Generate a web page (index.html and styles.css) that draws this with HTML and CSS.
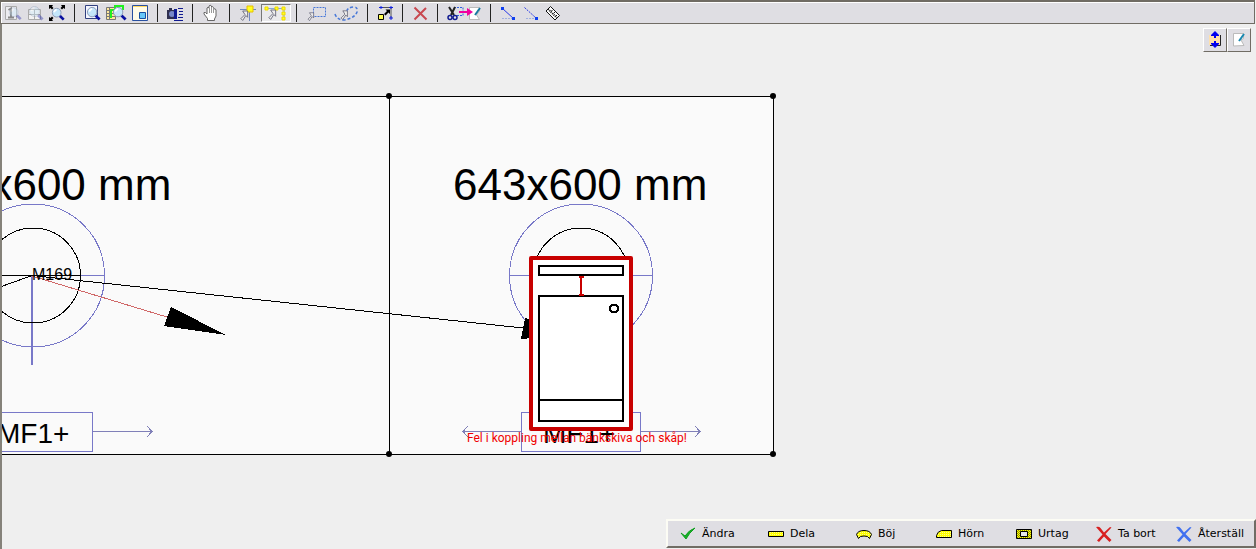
FILE: index.html
```html
<!DOCTYPE html>
<html lang="sv">
<head>
<meta charset="utf-8">
<title>Bänkskiva</title>
<link rel="stylesheet" href="styles.css">
</head>
<body>
<svg class="defs" width="0" height="0" aria-hidden="true">
  <defs>
    <symbol id="lens" viewBox="0 0 16 16">
      <path d="M10 10l4.500 4.500" stroke="#0a10a0" stroke-width="3"/>
      <circle cx="6.500" cy="6.500" r="5" fill="#c4e6fa" stroke="#8796b4"/>
      <path d="M3.500 6q.5-2.500 3-3" stroke="#fff" stroke-width="2" fill="none"/>
    </symbol>
    <symbol id="pointer" viewBox="0 0 10 12">
      <path d="M3 1h5.500v7L6.500 6 3 11.500 1 9.500 5.500 5z" fill="#eee" stroke="#667"/>
    </symbol>
    <symbol id="cross" viewBox="0 0 16 16">
      <path d="M0 1q3-1 4.500 1L8 6.500 14 1l1.500.5L9.500 8l6 6-2 2L8 10.500 3 16l-2-1.500L6.500 8.500z" fill="currentColor"/>
    </symbol>
    <pattern id="dots" width="2" height="2" patternUnits="userSpaceOnUse">
      <path d="M0 0h2v2H0z" fill="#ffff00"/><path d="M0 0h1v1H0z" fill="#ffff90"/>
    </pattern>
    <pattern id="darkdots" width="2" height="2" patternUnits="userSpaceOnUse">
      <path d="M0 0h2v2H0z" fill="#ffff00"/><path d="M0 0h1v1H0zM1 1h1v1H1z" fill="#8c8c00"/>
    </pattern>
  </defs>
</svg>

<header class="toolbar" role="toolbar" aria-label="Verktyg">
  <div class="group first">
    <button class="tool" aria-label="Skala 1:1" disabled><svg width="18" height="18"><path d="M1.500 2.500h11v13h-11z" fill="#ececf0" stroke="#aaa"/><path d="M4.500 6l2.500-1.500V13M4 13.500h6" fill="none" stroke="#888" stroke-width="2"/><use href="#lens" x="4" y="2" width="14" height="15" opacity=".35"/></svg></button>
    <button class="tool" aria-label="Zooma rutnät" disabled><svg width="18" height="18"><path d="M2.500 5.500h12v10h-12zM8.500 5v10M2 10.500h12" fill="#f2f2f2" stroke="#aaa"/><use href="#lens" x="2" y="1" width="16" height="16" opacity=".35"/></svg></button>
    <button class="tool" aria-label="Zooma allt"><svg width="18" height="18"><use href="#lens" x="3" y="3" width="14" height="14"/><path d="M1 1h4L4 2.500 5.500 4 4 5.500 2.500 4 1 5zM17 1h-4l1 1.500L12.500 4 14 5.500 15.500 4 17 5zM1 17v-4l1.500 1L4 12.500 5.500 14 4 15.500 5 17z"/></svg></button>
  </div>
  <span class="sep"></span>
  <div class="group">
    <button class="tool w24" aria-label="Zoomfönster"><svg width="18" height="18"><path d="M2.500 1.500h12v13h-12z" fill="#f4f6ff" stroke="#304080"/><use href="#lens" x="3" y="2" width="15" height="15"/></svg></button>
    <button class="tool w24" aria-label="Zooma urval"><svg width="22" height="18"><path d="M1.500 3.500h9v12h-9z" fill="#ffe89c" stroke="#777"/><path d="M1 6.500h9M1 9.500h9M1 12.500h9M4.500 3v12" stroke="#777"/><path d="M6 14V6h4V2h8v4" fill="none" stroke="#20f020" stroke-width="2"/><use href="#lens" x="7" y="2" width="15" height="15"/></svg></button>
    <button class="tool w24" aria-label="Översikt"><svg width="18" height="18"><path d="M1.500 1.500h15v15h-15z" fill="#fffce8" stroke="#2850a0"/><path d="M2 2.500h14" stroke="#ffd860"/><path d="M8.500 8.500h6v6h-6z" fill="#68c8f8" stroke="#1850a0"/></svg></button>
  </div>
  <span class="sep"></span>
  <div class="group">
    <button class="tool w24" aria-label="Kamera"><svg width="18" height="18"><path d="M1 6h2V4h3v2h3v9H1z" fill="#303050"/><circle cx="6" cy="10" r="3" fill="#7888c8"/><path d="M8 5h3v10H8z" fill="#101a90"/><path d="M12 4.500h5M13 7.500h4M13 10.500h4M12 13.500h5M8 16.500h9" stroke="#101a90"/></svg></button>
  </div>
  <span class="sep"></span>
  <div class="group">
    <button class="tool w26" aria-label="Panorera"><svg width="18" height="18"><path d="M5.500 16.500v-2L2 10V8.500h1.500L5 10V4q1-1.500 2 0V2q1-1.500 2.500 0v1q1.500-1 2 .5V5q2-1 2.500 1v6l-1.500 3v1.500z" fill="#fff" stroke="#666"/><path d="M7.500 4v5M9.500 3v6M11.500 4v5" stroke="#999"/></svg></button>
  </div>
  <span class="sep"></span>
  <div class="group">
    <button class="tool w26" aria-label="Välj punkt"><svg width="18" height="18"><path d="M1 5.500h16M10.500 5v12" stroke="#7088c0"/><path d="M8 2h6v6H8z" fill="#ffff20" stroke="#e8c000"/><use href="#pointer" x="1" y="6" width="9" height="11"/></svg></button>
    <button class="tool w30 pressed" aria-label="Välj punkter" aria-pressed="true"><svg width="24" height="18"><path d="M2 4.500h18v11" fill="none" stroke="#88a8d8"/><path d="M1 3h3v3H1zM11 3h3v3h-3zM18 3h3v3h-3zM18 8h3v3h-3zM18 13h3v3h-3z" fill="#ffff20" stroke="#f0d800"/><use href="#pointer" x="4" y="5" width="9" height="11"/></svg></button>
  </div>
  <span class="sep"></span>
  <div class="group">
    <button class="tool w30" aria-label="Rektangelval"><svg width="20" height="18"><path d="M6.500 3.500h12v9h-12z" fill="none" stroke="#4878d8" stroke-dasharray="2 1"/><use href="#pointer" x="0" y="8" width="8" height="9"/></svg></button>
    <button class="tool w30" aria-label="Frihandsval"><svg width="26" height="18"><path d="M1 10q2 6 9 6 11-2 13-8 1-5-3-5-8 0-8 8" fill="none" stroke="#4878d8" stroke-width="1.500" stroke-dasharray="3 2"/><use href="#pointer" x="6" y="6" width="9" height="10"/></svg></button>
  </div>
  <span class="sep"></span>
  <div class="group">
    <button class="tool w24" aria-label="Ändra storlek"><svg width="18" height="18"><path d="M5 3.500h10v11" fill="none" stroke="#555"/><path d="M3 3.500h4M5 2v3M13 3.500h4M15 2v3M13 14h4M15 12v4" stroke="#1020e0"/><path d="M2.500 10.500h5v5h-5z" fill="#ffff50" stroke="#000"/><path d="M8 10l3-3-1.500-1.500H14V10l-1.500-1.500-3 3z"/></svg></button>
  </div>
  <span class="sep"></span>
  <div class="group">
    <button class="tool w24" aria-label="Radera"><svg width="18" height="18"><path d="M3.500 3.500l12 12M15 4L3.500 15.500" stroke="#c84850" stroke-width="2"/></svg></button>
  </div>
  <span class="sep"></span>
  <div class="group">
    <button class="tool w42" aria-label="Klipp till anteckning"><svg width="36" height="18"><path d="M8 3.500h9v8H7" fill="none" stroke="#3060e0" stroke-dasharray="2 1"/><path d="M3 3l5 8M9 3L5 11" stroke="#222" stroke-width="2"/><circle cx="4" cy="13.500" r="2" fill="none" stroke="#101a90" stroke-width="1.500"/><circle cx="9" cy="13.500" r="2" fill="none" stroke="#101a90" stroke-width="1.500"/><path d="M23.500 3.500h10V7l-3 4 3 4.500h-10z" fill="#fff" stroke="#bbb"/><path d="M13 7h8V4l6 4-6 4V9h-8z" fill="#f000a0"/><path d="M29 11l5-7" stroke="#1878a0" stroke-width="2"/></svg></button>
  </div>
  <span class="sep"></span>
  <div class="group">
    <button class="tool w24" aria-label="Mät linje"><svg width="18" height="18"><path d="M3.500 4.500l11 10" stroke="#2838e8"/><path d="M3 14.500h10" stroke="#a0b0e0" stroke-dasharray="2 1"/><path d="M2 3h3v3H2zM13 13h3v3h-3z" fill="#1040f0"/></svg></button>
    <button class="tool" aria-label="Mät streckad linje"><svg width="18" height="18"><path d="M2.500 3.500l12 11" stroke="#2838e8" stroke-dasharray="2 1"/><path d="M4 14.500h10" stroke="#a0b0e0" stroke-dasharray="2 1"/><path d="M13 13h3v3h-3z" fill="#1040f0"/></svg></button>
    <button class="tool" aria-label="Linjal"><svg width="18" height="18"><path d="M6.500 2.500l9 9-4.500 4.500-9-9z" fill="#fff" stroke="#111"/><path d="M4 5l9 9" stroke="#111" stroke-width="2" stroke-dasharray="1 1"/><path d="M7 7.500l1.500-1.500M9.500 9.500l1.500-1.500M12 12l1-1" stroke="#111"/></svg></button>
  </div>
</header>

<main class="workspace">
  <svg class="drawing" width="100%" height="100%" role="img" aria-label="Ritning">
    <g transform="translate(-2 -24)" shape-rendering="crispEdges" fill="none">
      <path d="M-2 96.500H773.500V454.500H-2M389.500 96V454" fill="#fafafa" stroke="#000"/>
      <g fill="#000" shape-rendering="auto"><circle cx="389" cy="96" r="3"/><circle cx="773" cy="96" r="3"/><circle cx="389" cy="454" r="3"/><circle cx="773" cy="454" r="3"/></g>

      <g class="dimension"><text x="-83" y="200">643x600 mm</text><text x="453" y="200">643x600 mm</text></g>

      <g stroke="#7878c8">
        <circle cx="33" cy="275.500" r="71.500"/><path d="M33 275.500h72"/>
        <path d="M32 276v89" stroke-width="2"/>
        <path d="M-2 412.500H92.500V451.500H-2"/>
        <circle cx="581" cy="275.500" r="71.500"/><path d="M510 275.500h143"/>
        <path d="M521.500 412.500h119v39h-119z"/>
      </g>
      <g stroke="#8080b8"><path d="M93 431.500h60M147 426l5 5.500-5 5.500M521 431.500h-58M468 426l-5 5.500 5 5.500M641 431.500h59M695 426l5 5.500-5 5.500"/></g>
      <g stroke="#000">
        <circle cx="33" cy="275.500" r="47.500"/><circle cx="581" cy="275.500" r="47.500"/>
        <path d="M0 275.500h80M32 275.500L0 287M32 275.500L523 328"/>
      </g>
      <path d="M32 276l135 41" stroke="#d06868"/>
      <path d="M171 307l55 28-62-9zM525 318l60 16-64 5z" fill="#000"/>
      <text class="part" x="32" y="280">M169</text>
      <g class="cabinet-name"><text x="-3" y="443">MF1+</text><text x="543" y="443">MF1+</text></g>

      <rect x="531" y="258" width="100" height="171" fill="#fff" stroke="#c80000" stroke-width="4" stroke-linejoin="round" shape-rendering="auto"/>
      <path d="M539 266h84v9h-84zM539 296h84v125h-84zM539 400h84" stroke="#000" stroke-width="2"/>
      <circle cx="614" cy="308.500" r="4" stroke="#000" stroke-width="2"/>
      <path d="M581 277v18M579 277h5M579 294.500h5" stroke="#c80000" stroke-width="2"/>
      <text class="warning" x="467" y="442">Fel i koppling mellan bänkskiva och skåp!</text>
    </g>
  </svg>

  <div class="float-tools">
    <button class="tile" aria-label="Flytta vertikalt"><svg width="18" height="18"><path d="M3 4h11v10H3z" fill="#ffe0ac"/><path d="M14.500 4v10.500H4" fill="none" stroke="#222"/><path d="M9 0l4 4v1h-3v2H8V5H5V4zM9 17l4-4v-1h-3v-2H8v2H5v1z" fill="#0000f0"/></svg></button>
    <button class="tile" aria-label="Anteckning"><svg width="18" height="18"><path d="M3.500 2.500h10v5L11 9l3 5.500-10.500.5z" fill="#fff" stroke="#bbb"/><path d="M9 10l5-7" stroke="#1888b0" stroke-width="2"/></svg></button>
  </div>

  <nav class="actions" aria-label="Åtgärder">
    <button class="action wide"><svg width="16" height="16"><path d="M1 7l4 3q4-6 10-8-6 5-9 11z" fill="#18b028" stroke="#10a020"/></svg>Ändra</button>
    <button class="action wide"><svg width="16" height="16"><path d="M.5 5.500h15v5H.5z" fill="url(#dots)" stroke="#000"/></svg>Dela</button>
    <button class="action"><svg width="16" height="16"><path d="M.5 8.500Q2 4.500 8 4.500t7.500 4l-2 4-2-2q-3.500-1-7 0l-2 2z" fill="url(#dots)" stroke="#000"/></svg>Böj</button>
    <button class="action"><svg width="16" height="16"><path d="M.5 11.500v-2q1-4 5-5h10v7z" fill="url(#dots)" stroke="#000"/></svg>Hörn</button>
    <button class="action"><svg width="16" height="16"><path d="M.5 3.500h15v9H.5z" fill="url(#darkdots)" stroke="#000"/><path d="M4.500 5.500h7v5h-7z" fill="#e8e8e8" stroke="#000"/></svg>Urtag</button>
    <button class="action red"><svg width="16" height="16"><use href="#cross" width="16" height="16"/></svg>Ta bort</button>
    <button class="action blue last"><svg width="16" height="16"><use href="#cross" width="16" height="16"/></svg>Återställ</button>
  </nav>
</main>
</body>
</html>
```

FILE: styles.css
```css
* { box-sizing: border-box; }

html, body { height: 100%; }

body {
  margin: 0;
  display: flex;
  flex-direction: column;
  background: #efefef;
  color: #000;
  font-family: "DejaVu Sans", Verdana, sans-serif;
  font-size: 11px;
  overflow: hidden;
}

.defs { position: absolute; }

button {
  margin: 0;
  padding: 0;
  border: 0;
  background: none;
  color: inherit;
  font: inherit;
}

svg { display: block; flex: none; }

.toolbar {
  flex: none;
  display: flex;
  align-items: center;
  height: 24px;
  margin-right: 1px;
  padding-left: 1px;
  border: 1px solid #706c64;
  border-top-width: 2px;
  background: #dfdee3;
  box-shadow: inset 1px 1px #fff;
}

.group { display: flex; }

.first { padding-right: 1px; }

.tool {
  display: flex;
  align-items: center;
  justify-content: center;
  width: 22px;
  height: 18px;
}

.w24 { width: 24px; }
.w26 { width: 26px; }
.w30 { width: 30px; }
.w42 { width: 42px; }

.pressed {
  border: 1px solid;
  border-color: #777 #fff #fff #777;
  background: #eaeaec;
}

.sep {
  width: 1px;
  height: 18px;
  margin: 0 5px;
  background: #222;
}

.workspace {
  position: relative;
  flex: 1;
  min-height: 0;
  border-left: 2px solid #85827a;
  overflow: hidden;
}

.drawing {
  font-family: "Liberation Sans", Arial, sans-serif;
}

.drawing text { fill: #000; }
.dimension { font-size: 44px; }
.cabinet-name { font-size: 28px; }
.part { font-size: 16px; }
.drawing .warning { fill: #f00000; font-family: Roboto, Arial, sans-serif; font-size: 12px; }

.float-tools {
  position: absolute;
  top: 4px;
  right: 5px;
  display: flex;
}

.tile {
  display: flex;
  align-items: center;
  justify-content: center;
  width: 24px;
  height: 24px;
  border: 1px solid;
  border-color: #fff #706c64 #706c64 #fff;
  background: #dfdee3;
}

.actions {
  position: absolute;
  right: 0;
  bottom: 1px;
  display: flex;
  height: 29px;
  padding-left: 12px;
  border: 2px solid;
  border-color: #fcfcf4 #706c64 #706c64 #fcfcf4;
  background: #dfdee3;
}

.action {
  display: flex;
  align-items: center;
  gap: 6px;
  width: 80px;
  white-space: nowrap;
}

.wide { width: 88px; }
.last { width: 78px; }
.red svg { color: #d82020; }
.blue svg { color: #4070f0; }
```
